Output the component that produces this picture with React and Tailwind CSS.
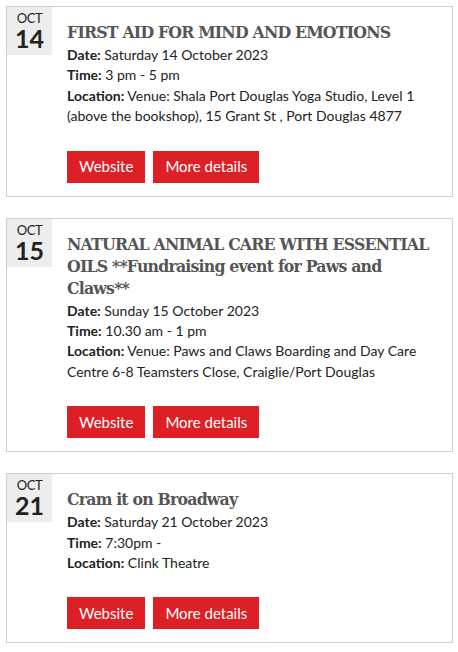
const events = [
  {
    id: 1,
    month: "OCT",
    day: "14",
    title: "FIRST AID FOR MIND AND EMOTIONS",
    date: "Saturday 14 October 2023",
    time: "3 pm - 5 pm",
    location:
      "Venue: Shala Port Douglas Yoga Studio, Level 1 (above the bookshop), 15 Grant St , Port Douglas 4877",
  },
  {
    id: 2,
    month: "OCT",
    day: "15",
    title:
      "NATURAL ANIMAL CARE WITH ESSENTIAL OILS **Fundraising event for Paws and Claws**",
    date: "Sunday 15 October 2023",
    time: "10.30 am - 1 pm",
    location:
      "Venue: Paws and Claws Boarding and Day Care Centre 6-8 Teamsters Close, Craiglie/Port Douglas",
  },
  {
    id: 3,
    month: "OCT",
    day: "21",
    title: "Cram it on Broadway",
    date: "Saturday 21 October 2023",
    time: "7:30pm -",
    location: "Clink Theatre",
  },
];

export default function App() {
  return (
    <div className="min-h-screen bg-white px-[6px] pt-[6px] font-['Lato',sans-serif] text-[#222]">
      <div className="flex flex-col gap-[21px]">
        {events.map((event) => (
          <EventCard key={event.id} event={event} />
        ))}
      </div>
    </div>
  );
}

function EventCard({ event }) {
  return (
    <div className="flex border border-[#cfcfcf] w-[447px]">
      <div className="flex flex-col items-center shrink-0 w-[45px] h-[48px] bg-[#ededed] pt-[4px]">
        <span className="text-[13px] leading-[15px] tracking-[-0.5px]">
          {event.month}
        </span>
        <span className="text-[25px] leading-[24px] font-bold">
          {event.day}
        </span>
      </div>

      <div className="flex-1 pl-[15px] pr-[10px] pt-[14px] pb-[13px]">
        <h2 className="font-['DejaVu_Serif_Condensed','DejaVu_Serif',serif] font-stretch-condensed font-bold text-[17.5px] leading-[22px] text-[#555] tracking-[-0.8px] mb-[2px]">
          {event.title}
        </h2>

        <div className="text-[14px] leading-[20.4px]">
          <p>
            <span className="font-bold">Date:</span> {event.date}
          </p>
          <p>
            <span className="font-bold">Time:</span> {event.time}
          </p>
          <p>
            <span className="font-bold">Location:</span> {event.location}
          </p>
        </div>

        <div className="flex gap-[8px] mt-[24px]">
          <Button>Website</Button>
          <Button>More details</Button>
        </div>
      </div>
    </div>
  );
}

function Button({ children }) {
  return (
    <button className="h-[32px] px-[12px] bg-[#dd1f26] text-white text-[15px]">
      {children}
    </button>
  );
}
